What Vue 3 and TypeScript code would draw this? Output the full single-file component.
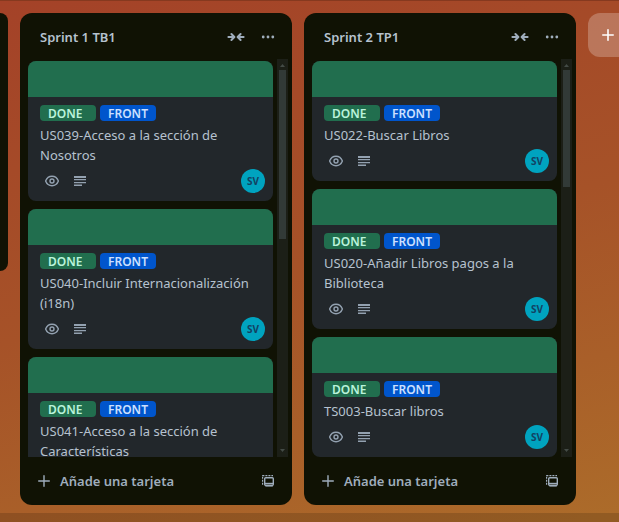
<script setup lang="ts">
interface Card {
  title: string
}

interface List {
  name: string
  thumb: number
  cards: Card[]
}

const lists: List[] = [
  {
    name: 'Sprint 1 TB1',
    thumb: 45,
    cards: [
      { title: 'US039-Acceso a la sección de Nosotros' },
      { title: 'US040-Incluir Internacionalización (i18n)' },
      { title: 'US041-Acceso a la sección de Características' },
    ],
  },
  {
    name: 'Sprint 2 TP1',
    thumb: 31,
    cards: [
      { title: 'US022-Buscar Libros' },
      { title: 'US020-Añadir Libros pagos a la Biblioteca' },
      { title: 'TS003-Buscar libros' },
    ],
  },
]
</script>

<template>
  <div class="page">
    <main class="board">
      <div class="list-edge"></div>

      <section v-for="list in lists" :key="list.name" class="list">
        <header class="list-header">
          <h2>{{ list.name }}</h2>
          <button class="icon-button" type="button" aria-label="Contraer lista">
            <svg width="18" height="10" viewBox="0 0 18 10" fill="none" stroke="currentColor" stroke-width="2" stroke-linecap="round" stroke-linejoin="round">
              <path d="M1.4 5H7M4.4 2 7.4 5 4.4 8M16.6 5H11M13.6 2 10.6 5 13.6 8" />
            </svg>
          </button>
          <button class="icon-button" type="button" aria-label="Menú de la lista">
            <svg width="14" height="4" viewBox="0 0 14 4" fill="currentColor">
              <circle cx="2.2" cy="2" r="1.4" />
              <circle cx="7" cy="2" r="1.4" />
              <circle cx="11.8" cy="2" r="1.4" />
            </svg>
          </button>
        </header>

        <div class="list-body">
          <ol class="cards">
            <li v-for="card in list.cards" :key="card.title" class="card">
              <div class="cover"></div>
              <div class="card-content">
                <div class="labels">
                  <span class="label done">DONE</span>
                  <span class="label front">FRONT</span>
                </div>
                <a class="card-title" href="#">{{ card.title }}</a>
                <div class="meta">
                  <svg class="badge" width="16" height="16" viewBox="0 0 16 16" fill="none" stroke="currentColor" stroke-width="1.4">
                    <path d="M1.6 8C2.8 4.9 5.2 3.3 8 3.3S13.2 4.9 14.4 8C13.2 11.1 10.8 12.7 8 12.7S2.8 11.1 1.6 8Z" />
                    <circle cx="8" cy="8" r="2" />
                  </svg>
                  <svg class="badge" width="16" height="16" viewBox="0 0 16 16" fill="currentColor">
                    <path d="M2 3h12v2H2zM2 6h12v1.2H2zM2 9h12v1.2H2zM2 11.4h8v1.6H2z" />
                  </svg>
                  <span class="avatar">SV</span>
                </div>
              </div>
            </li>
          </ol>
          <div class="scrollbar">
            <svg width="5" height="3" viewBox="0 0 5 3"><path d="M0 3 2.5 0 5 3Z" fill="#444b46" /></svg>
            <div class="track">
              <div class="thumb" :style="{ height: list.thumb + '%' }"></div>
            </div>
            <svg width="5" height="3" viewBox="0 0 5 3"><path d="M0 0 2.5 3 5 0Z" fill="#444b46" /></svg>
          </div>
        </div>

        <footer class="list-footer">
          <button class="add-card" type="button">
            <svg width="12" height="12" viewBox="0 0 12 12" fill="none" stroke="currentColor" stroke-width="1.4" stroke-linecap="round">
              <path d="M6 .7V11.3M.7 6H11.3" />
            </svg>
            Añade una tarjeta
          </button>
          <button class="icon-button" type="button" aria-label="Crear desde plantilla">
            <svg width="12" height="12" viewBox="0 0 12 12" fill="none" stroke="currentColor">
              <rect x="2.7" y="2.7" width="8.6" height="7.6" rx="1" stroke-width="1.4" />
              <path d="M3 8.4H11" stroke-width="1.2" />
              <path d="M3.4 10.8H10.8" stroke-width="1.6" />
              <path d="M.6 9.8V.6H11" stroke-width="1.2" stroke-dasharray="2 1" />
            </svg>
          </button>
        </footer>
      </section>

      <button class="add-list" type="button" aria-label="Añade otra lista">
        <svg width="12" height="12" viewBox="0 0 12 12" fill="none" stroke="currentColor" stroke-width="1.6" stroke-linecap="round">
          <path d="M6 .8V11.2M.8 6H11.2" />
        </svg>
      </button>
    </main>
    <div class="board-scroll"></div>
  </div>
</template>

<style>
body {
  margin: 0;
  overflow: hidden;
}
</style>

<style scoped>
* {
  box-sizing: border-box;
}

.page {
  display: flex;
  flex-direction: column;
  height: 100vh;
  border-top: 1px solid #86391f;
  background: linear-gradient(165deg, #a44228 0%, #a65228 50%, #ac6c2a 100%);
  color: #b6c2cf;
  font-family: "Noto Sans", "Open Sans", sans-serif;
  font-size: 13px;
  line-height: 20px;
  overflow: hidden;
}

button {
  padding: 0;
  border: 0;
  background: none;
  color: inherit;
  font: inherit;
  cursor: pointer;
}

svg {
  display: block;
  flex: none;
}

.board {
  display: flex;
  flex: 1;
  align-items: flex-start;
  gap: 12px;
  min-height: 0;
  padding: 12px 0 8px;
}

.board-scroll {
  flex: none;
  height: 9px;
  background: rgba(0, 0, 0, 0.15);
}

.list-edge {
  flex: none;
  width: 8px;
  height: 52.5%;
  border-radius: 0 12px 12px 0;
  background: #101204;
}

.list {
  display: flex;
  flex: none;
  flex-direction: column;
  width: 272px;
  height: 100%;
  border-radius: 12px;
  background: #101204;
}

.list-header {
  display: flex;
  flex: none;
  align-items: center;
  height: 46px;
  padding: 2px 8px 0 20px;
}

h2 {
  flex: 1;
  margin: 0;
  font-size: 13px;
  font-weight: 600;
}

.icon-button {
  display: flex;
  align-items: center;
  justify-content: center;
  width: 32px;
  height: 32px;
  color: #9fadbc;
}

.list-body {
  display: flex;
  flex: 1;
  gap: 4px;
  min-height: 0;
  padding: 0 4px 0 8px;
}

.cards {
  display: flex;
  flex: 1;
  flex-direction: column;
  gap: 8px;
  margin: 0;
  padding: 2px 0 0;
  list-style: none;
  overflow: hidden;
}

.card {
  flex: none;
  border-radius: 8px;
  background: #22272b;
  overflow: hidden;
}

.cover {
  height: 36px;
  background: #216e4e;
}

.card-content {
  padding: 8px 8px 8px 12px;
}

.labels {
  display: flex;
  gap: 4px;
  margin-bottom: 4px;
}

.label {
  width: 56px;
  height: 16px;
  padding-left: 8px;
  border-radius: 4px;
  font-size: 12px;
  font-weight: 600;
  line-height: 18px;
}

.done {
  background: #216e4e;
  color: #baf3db;
}

.front {
  background: #0055cc;
  color: #cce0ff;
}

.card-title {
  display: block;
  color: inherit;
  text-decoration: none;
}

.meta {
  display: flex;
  align-items: center;
  gap: 12px;
  margin-top: 4px;
  padding-left: 4px;
  color: #93a1b0;
}

.avatar {
  width: 24px;
  height: 24px;
  margin-left: auto;
  border-radius: 50%;
  background: #00a3bf;
  color: #124263;
  font-size: 10px;
  font-weight: 700;
  line-height: 24px;
  text-align: center;
}

.scrollbar {
  display: flex;
  flex: none;
  flex-direction: column;
  align-items: center;
  width: 11px;
  padding: 5px 0;
  background: #1c1f17;
}

.track {
  flex: 1;
  width: 7px;
  margin: 3px 0;
}

.thumb {
  background: #323a37;
}

.list-footer {
  display: flex;
  flex: none;
  align-items: center;
  height: 48px;
  padding: 0 8px 0 18px;
}

.add-card {
  display: flex;
  flex: 1;
  align-items: center;
  gap: 10px;
  height: 32px;
  color: #9fadbc;
  font-weight: 600;
}

.add-list {
  display: flex;
  flex: none;
  align-items: center;
  width: 272px;
  height: 44px;
  padding-left: 14px;
  border-radius: 12px;
  background: rgba(255, 255, 255, 0.24);
  color: #fff;
}
</style>
